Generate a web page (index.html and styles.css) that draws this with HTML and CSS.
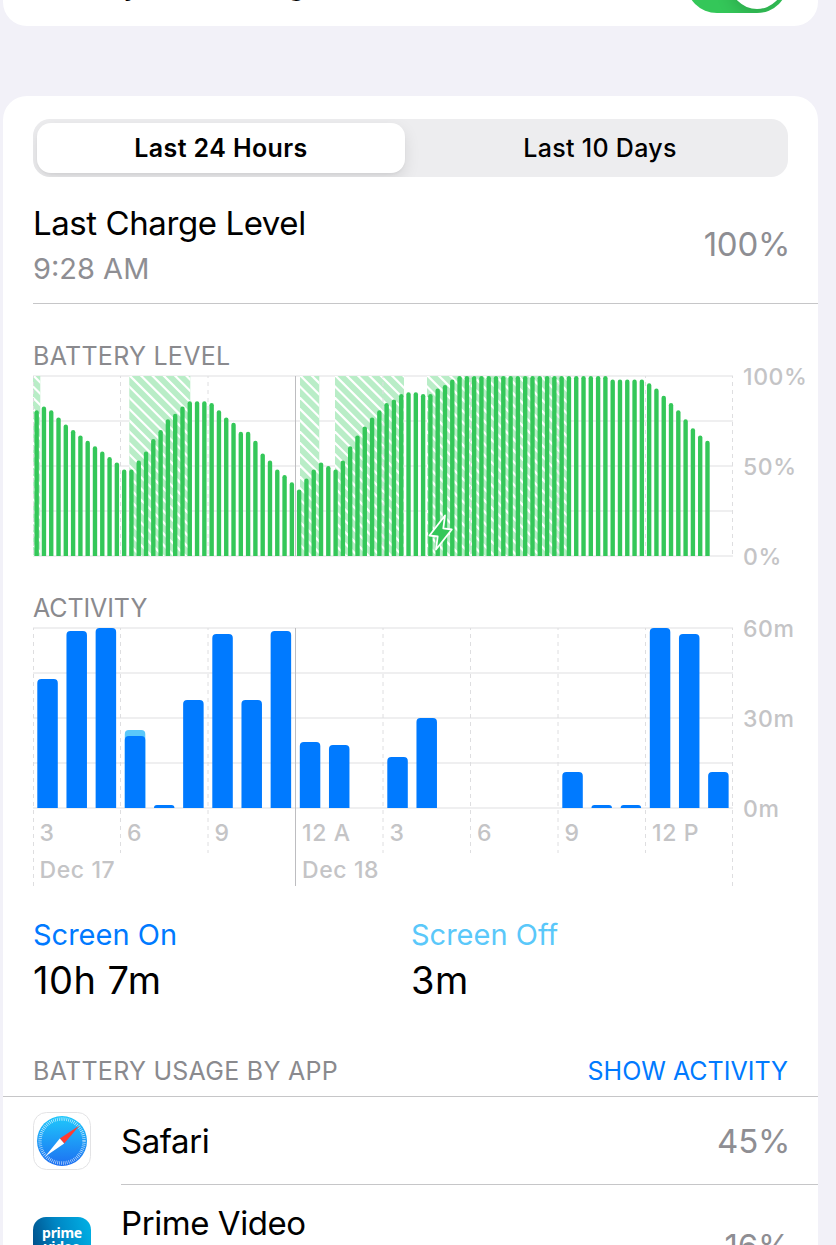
FILE: index.html
```html
<!DOCTYPE html>
<html lang="en">
<head>
  <meta charset="UTF-8" />
  <meta name="viewport" content="width=device-width, initial-scale=1.0"/>
  <title>Battery</title>
  <link rel="stylesheet" href="styles.css">
</head>
<body>
  <section class="card card-top">
    <span class="row-title">Battery Percentage</span>
    <span class="switch"><span class="knob"></span></span>
  </section>

  <main class="card card-main">
    <div class="segmented">
      <button class="segment active">Last 24 Hours</button>
      <button class="segment">Last 10 Days</button>
    </div>

    <div class="charge">
      <div>
        <div class="charge-title">Last Charge Level</div>
        <div class="charge-time">9:28 AM</div>
      </div>
      <div class="value">100%</div>
    </div>

    <h2 class="caption caption-level">BATTERY LEVEL</h2>
    <svg class="chart" id="levelChart" width="785" height="200" viewBox="0 0 785 200"></svg>

    <h2 class="caption caption-activity">ACTIVITY</h2>
    <svg class="chart" id="activityChart" width="785" height="270" viewBox="0 0 785 270"></svg>

    <div class="totals">
      <div>
        <div class="total-label on">Screen On</div>
        <div class="total-value">10h 7m</div>
      </div>
      <div>
        <div class="total-label off">Screen Off</div>
        <div class="total-value">3m</div>
      </div>
    </div>

    <div class="usage-header">
      <h2 class="caption">BATTERY USAGE BY APP</h2>
      <a class="show-link" href="#">SHOW ACTIVITY</a>
    </div>

    <div class="app">
      <svg class="app-icon" width="58" height="58" viewBox="0 0 58 58">
        <defs>
          <linearGradient id="sky" x1="0" y1="0" x2="0" y2="1">
            <stop offset="0" stop-color="#1fc8fb"/>
            <stop offset="1" stop-color="#1d6ff2"/>
          </linearGradient>
        </defs>
        <rect x="0.5" y="0.5" width="57" height="57" rx="13" fill="#fff" stroke="#e3e3e5"/>
        <circle cx="29" cy="29" r="25" fill="url(#sky)"/>
        <circle cx="29" cy="29" r="22" fill="none" stroke="#fff" stroke-opacity="0.75" stroke-width="3.4" stroke-dasharray="0.7 1.22"/>
        <path d="M46.5 13.5 L26.8 26.4 L31.2 31.6 Z" fill="#ff3b30"/>
        <path d="M12.2 44.5 L26.8 26.4 L31.2 31.6 Z" fill="#fff"/>
      </svg>
      <div class="app-row">
        <span class="app-name">Safari</span>
        <span class="value">45%</span>
      </div>
    </div>

    <div class="app app-prime">
      <div class="prime-icon">prime<br>video</div>
      <div class="app-row last">
        <span class="app-name">Prime Video</span>
        <span class="value">16%</span>
      </div>
    </div>
  </main>

  <script src="charts.js"></script>
</body>
</html>
```

FILE: styles.css
```css
* {
  box-sizing: border-box;
}

body {
  margin: 0;
  height: 1245px;
  overflow: hidden;
  background-color: #f2f1f8;
  font-family: Inter, sans-serif;
  color: #000;
}

.card {
  width: 815px;
  margin-left: 3px;
  background-color: #fff;
}

.card-top {
  display: flex;
  justify-content: space-between;
  align-items: center;
  height: 88px;
  margin-top: -62px;
  padding: 0 30px;
  border-radius: 0 0 24px 24px;
}

.row-title {
  font-size: 33px;
  letter-spacing: -0.4px;
}

.switch {
  width: 102px;
  height: 62px;
  padding: 4px;
  border-radius: 31px;
  background-color: #34c759;
  overflow: hidden;
}

.knob {
  display: block;
  width: 54px;
  height: 54px;
  margin-left: auto;
  border-radius: 50%;
  background-color: #fff;
  box-shadow: 0 6px 16px rgba(0, 0, 0, 0.15);
}

.card-main {
  height: 1200px;
  margin-top: 70px;
  padding-top: 23px;
  border-radius: 24px 24px 0 0;
}

/* segmented control */
.segmented {
  display: flex;
  width: 755px;
  height: 58px;
  margin-left: 30px;
  padding: 4px;
  border-radius: 17px;
  background-color: #ededef;
  overflow: hidden;
}

.segment {
  flex: 1;
  padding: 0 0 0 11px;
  border: none;
  border-radius: 14px;
  background: none;
  font-family: inherit;
  font-size: 25px;
  font-weight: 500;
  letter-spacing: 0.3px;
  color: #000;
}

.segment.active {
  flex: 0 0 368px;
  padding: 0;
  background-color: #fff;
  font-weight: 600;
  letter-spacing: 0.4px;
  box-shadow: 0 6px 16px rgba(0, 0, 0, 0.1), 0 2px 2px rgba(0, 0, 0, 0.03);
}

/* last charge */
.charge {
  display: flex;
  justify-content: space-between;
  align-items: center;
  height: 127px;
  margin-left: 30px;
  padding: 7px 30px 0 0;
  border-bottom: 1px solid #c6c6c8;
}

.charge-title {
  padding-top: 4px;
  font-size: 33px;
  line-height: 46px;
  letter-spacing: -0.42px;
}

.charge-time {
  font-size: 29px;
  line-height: 45px;
  color: #8e8e93;
}

.value {
  margin-right: -2px;
  font-size: 33px;
  letter-spacing: -0.3px;
  color: #8e8e93;
}

.caption {
  margin: 0;
  font-size: 25px;
  font-weight: 400;
  line-height: 30px;
  letter-spacing: 0.27px;
  color: #8a8a8e;
}

.caption-level {
  margin: 37px 0 0 30px;
}

.caption-activity {
  margin: 27px 0 0 30px;
  letter-spacing: -0.1px;
}

/* charts */
.chart {
  display: block;
  margin-left: 30px;
  margin-top: -5px;
}

.axis {
  font-size: 23px;
  font-weight: 500;
  letter-spacing: 0.6px;
  fill: #c4c4c6;
}

.grid {
  stroke: #efeff0;
  stroke-width: 2;
}

.dash {
  stroke: #dedee0;
  stroke-width: 1;
  stroke-dasharray: 4 4;
  stroke-dashoffset: 2;
}

.midnight {
  stroke: #bdbdc0;
  stroke-width: 1;
}

.charging {
  fill: #b9edc7;
}

.stripe {
  stroke: #fff;
  stroke-width: 2.2;
}

.level {
  fill: #34c759;
}

.screen-on {
  fill: #007aff;
}

.screen-off {
  fill: #5ac8fa;
}

.bolt {
  fill: #34c759;
  stroke: #fff;
  stroke-width: 1.8;
  stroke-linejoin: round;
}

/* totals */
.totals {
  display: grid;
  grid-template-columns: 378px 1fr;
  margin: 27px 0 0 30px;
}

.total-label {
  font-size: 29px;
  line-height: 40px;
}

.total-label.on {
  color: #007aff;
}

.total-label.off {
  color: #5ac8fa;
}

.total-value {
  font-size: 38px;
  line-height: 50px;
  letter-spacing: 0.5px;
}

/* usage list */
.usage-header {
  display: flex;
  justify-content: space-between;
  align-items: center;
  height: 92px;
  padding: 40px 30px 0;
  border-bottom: 1px solid #c6c6c8;
}

.show-link {
  font-size: 25px;
  line-height: 30px;
  color: #007aff;
  text-decoration: none;
}

.app {
  display: flex;
  height: 88px;
  padding-left: 30px;
}

.app-icon {
  margin-top: 15px;
}

.app-row {
  flex: 1;
  display: flex;
  justify-content: space-between;
  align-items: center;
  margin-left: 30px;
  padding-right: 30px;
  border-bottom: 1px solid #c6c6c8;
}

.app-row.last {
  align-items: flex-start;
  border: none;
}

.app-name {
  font-size: 33px;
  letter-spacing: -0.43px;
}

.app-prime .app-name {
  line-height: 40px;
  margin-top: 18px;
}

.app-prime .value {
  line-height: 40px;
  margin-top: 41px;
}

.prime-icon {
  width: 58px;
  height: 58px;
  margin-top: 32px;
  padding-top: 9px;
  border-radius: 13px;
  background: linear-gradient(75deg, #00437c, #0086c4 50%, #00b2e6);
  font-family: "Noto Sans", sans-serif;
  font-size: 14px;
  font-weight: 700;
  line-height: 14px;
  letter-spacing: -0.3px;
  text-align: center;
  color: #fff;
}
```

FILE: charts.js
```js
const NS = 'http://www.w3.org/2000/svg';
const WIDTH = 700;
const HEIGHT = 180;
const TOP = 10;
const BOTTOM = TOP + HEIGHT;

function add(parent, tag, attrs, text) {
  const el = document.createElementNS(NS, tag);
  for (const key in attrs) el.setAttribute(key, attrs[key]);
  if (text) el.textContent = text;
  parent.appendChild(el);
  return el;
}

// bar with rounded top corners and a flat base
function barPath(x, width, height, r) {
  r = Math.min(r, height);
  const y = BOTTOM - height;
  return `M${x} ${BOTTOM}V${y + r}Q${x} ${y} ${x + r} ${y}H${x + width - r}Q${x + width} ${y} ${x + width} ${y + r}V${BOTTOM}Z`;
}

function drawGrid(svg, labels) {
  for (let i = 0; i <= 4; i++) {
    const y = TOP + i * HEIGHT / 4;
    add(svg, 'line', { class: 'grid', x1: 0, x2: WIDTH, y1: y, y2: y });
  }
  labels.forEach((label, i) => {
    add(svg, 'text', { class: 'axis', x: 710, y: TOP + i * 90 + 8.5 }, label);
  });
}

// vertical lines every three hours
function drawHours(svg, shortEnd, longEnd) {
  for (let i = 0; i <= 8; i++) {
    const x = i === 8 ? 699.5 : i === 0 ? 0.5 : i * 87.5;
    const end = i === 0 || i === 8 || i === 3 ? longEnd : shortEnd;
    add(svg, 'line', { class: i === 3 ? 'midnight' : 'dash', x1: x, x2: x, y1: TOP, y2: end });
  }
}

// charging period, filled with diagonal stripes
function drawCharging(svg, from, to, id) {
  const clip = add(svg, 'clipPath', { id: id });
  const box = { x: from, y: TOP, width: to - from, height: HEIGHT };
  add(clip, 'rect', box);
  add(svg, 'rect', { class: 'charging', ...box });
  const group = add(svg, 'g', { 'clip-path': `url(#${id})` });
  for (let x = from - HEIGHT; x < to; x += 11.3) {
    add(group, 'line', { class: 'stripe', x1: x - 5, y1: TOP - 5, x2: x + HEIGHT + 5, y2: BOTTOM + 5 });
  }
}

// battery level, one value for each 15 minutes
const levels = [
  81, 83, 81, 77, 73, 70, 67, 64, 61, 58, 55, 52, 48, 48, 53, 58,
  65, 70, 76, 79, 83, 86, 86, 86, 85, 81, 77, 74, 69, 69, 64, 57,
  53, 48, 45, 41, 37, 43, 48, 52, 50, 48, 53, 61, 67, 72, 77, 81,
  85, 87, 90, 91, 91, 90, 90, 93, 95, 98, 100, 100, 100, 100, 100, 100,
  100, 100, 100, 100, 100, 100, 100, 100, 100, 100, 100, 100, 100, 100, 100, 98,
  98, 98, 98, 98, 96, 93, 89, 85, 81, 76, 71, 67, 64
];
const charging = [[0, 7.3], [96.3, 157.3], [267, 286.3], [302, 371], [394, 534]];

const levelChart = document.getElementById('levelChart');
drawGrid(levelChart, ['100%', '50%', '0%']);
charging.forEach(([from, to], i) => drawCharging(levelChart, from, to, 'charging' + i));
drawHours(levelChart, BOTTOM, BOTTOM);
levels.forEach((level, i) => {
  const slot = WIDTH / 96;
  add(levelChart, 'path', { class: 'level', d: barPath(i * slot + 1.45, 4.4, level * 1.8, 2.2) });
});
add(levelChart, 'path', { class: 'bolt', d: 'M412 149.5L396.5 169.5L404.7 170.5L403 183.5L418.8 163.5L410.3 162.3Z' });

// minutes of activity in each hour: [screen on, screen off]
const activity = [
  [43, 0], [59, 0], [60, 0], [24, 2], [1, 0], [36, 0], [58, 0], [36, 0],
  [59, 0], [22, 0], [21, 0], [0, 0], [17, 0], [30, 0], [0, 0], [0, 0],
  [0, 0], [0, 0], [12, 0], [1, 0], [1, 0], [60, 0], [58, 0], [12, 0]
];

const activityChart = document.getElementById('activityChart');
drawGrid(activityChart, ['60m', '30m', '0m']);
drawHours(activityChart, 235, 268);
activity.forEach(([on, off], i) => {
  const x = i * WIDTH / 24 + 4.3;
  if (off) add(activityChart, 'path', { class: 'screen-off', d: barPath(x, 20.5, (on + off) * 3, 4) });
  if (on) add(activityChart, 'path', { class: 'screen-on', d: barPath(x, 20.5, on * 3, 4) });
});
['3', '6', '9', '12 A', '3', '6', '9', '12 P'].forEach((label, i) => {
  add(activityChart, 'text', { class: 'axis', x: i * 87.5 + 6.5, y: 222.5 }, label);
});
add(activityChart, 'text', { class: 'axis', x: 6.5, y: 259.5 }, 'Dec 17');
add(activityChart, 'text', { class: 'axis', x: 269, y: 259.5 }, 'Dec 18');
```
